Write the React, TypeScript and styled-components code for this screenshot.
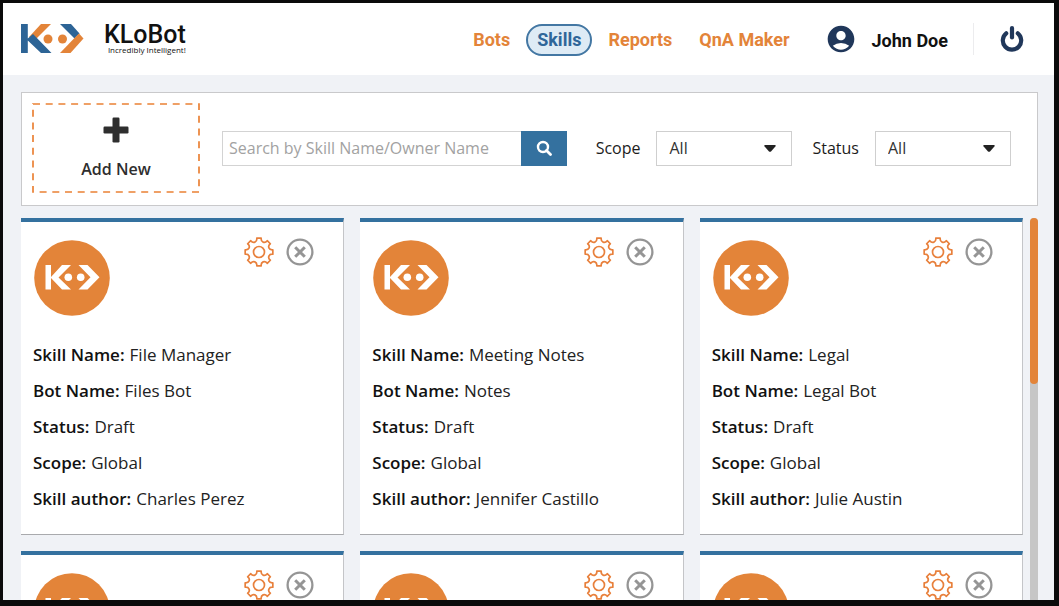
import React from "react";
import styled, { createGlobalStyle } from "styled-components";
import { MdAccountCircle } from "react-icons/md";

const orange = "#e38439";
const blue = "#34719f";
const navy = "#20375a";
const textFont = '"Open Sans", "Noto Sans", sans-serif';

const GlobalStyle = createGlobalStyle`
  * { box-sizing: border-box; }
  body { margin: 0; background: #0b0b0b; font-family: ${textFont}; }
  button, input, select { font: inherit; color: inherit; }
`;

const Frame = styled.div`
  height: 100vh;
  display: flex;
  flex-direction: column;
  border: solid #0b0b0b;
  border-width: 3px 5px 6px 3px;
  background: #f0f2f6;
  overflow: hidden;
`;

const Header = styled.header`
  flex: none;
  display: flex;
  align-items: center;
  height: 72px;
  padding: 0 30px 0 18px;
  background: #fff;
  font-family: Roboto, sans-serif;
`;

const Brand = styled.a`
  display: flex;
  align-items: center;
  gap: 20px;
  color: #111;
  text-decoration: none;
`;

const BrandText = styled.span`
  display: flex;
  flex-direction: column;
  align-items: flex-end;
`;

const BrandName = styled.span`
  font-size: 25px;
  font-weight: 500;
  line-height: 22px;
`;

const Tagline = styled.span`
  font-family: ${textFont};
  font-size: 8px;
  line-height: 8px;
`;

const Nav = styled.nav`
  display: flex;
  align-items: center;
  gap: 5px;
  margin-left: auto;
  padding-top: 2px;
`;

const NavLink = styled.a<{ $active?: boolean }>`
  padding: 0 9px;
  border: 2px solid ${(p) => (p.$active ? "#4377a3" : "transparent")};
  border-radius: 16px;
  background: ${(p) => (p.$active ? "#deebf5" : "transparent")};
  color: ${(p) => (p.$active ? "#2f6699" : orange)};
  font-size: 18px;
  font-weight: 700;
  line-height: 28px;
  text-decoration: none;
`;

const User = styled.div`
  display: flex;
  align-items: center;
  gap: 15px;
  height: 32px;
  margin-left: 24px;
  padding-right: 25px;
  border-right: 1px solid #ececee;
  color: #111;
  font-size: 18px;
  font-weight: 700;
  svg { color: ${navy}; }
`;

const UserName = styled.span`
  padding-top: 2px;
`;

const IconButton = styled.button`
  display: flex;
  padding: 0;
  border: 0;
  background: none;
  cursor: pointer;
`;

const PowerButton = styled(IconButton)`
  margin-left: 26px;
  color: ${navy};
`;

const Main = styled.main`
  flex: 1;
  min-height: 0;
  display: flex;
  flex-direction: column;
  gap: 12px;
  padding: 17px 16px 0 18px;
`;

const Toolbar = styled.section`
  flex: none;
  display: flex;
  align-items: center;
  padding: 10px 26px 12px 10px;
  border: 1px solid #c9c9cb;
  background: #fff;
`;

const AddButton = styled.button`
  position: relative;
  flex: none;
  display: flex;
  flex-direction: column;
  align-items: center;
  gap: 15px;
  width: 168px;
  height: 90px;
  padding: 14px 0 0;
  border: 0;
  background: none;
  color: #2e2e2e;
  font-size: 16px;
  font-weight: 600;
  line-height: 22px;
  cursor: pointer;
`;

const Dashes = styled.svg`
  position: absolute;
  inset: 0;
  width: 100%;
  height: 100%;
`;

const Search = styled.form`
  flex: 1;
  display: flex;
  height: 35px;
  margin-left: 22px;
`;

const SearchInput = styled.input`
  flex: 1;
  min-width: 0;
  padding: 0 6px;
  border: 1px solid #d3d3d3;
  border-right: 0;
  background: #fff;
  font-size: 16px;
  &::placeholder { color: #a2a2a2; opacity: 1; }
`;

const SearchButton = styled.button`
  display: flex;
  align-items: center;
  justify-content: center;
  width: 46px;
  padding: 0;
  border: 0;
  background: ${blue};
  cursor: pointer;
`;

const Filter = styled.label<{ $gap: number }>`
  display: flex;
  align-items: center;
  gap: 16px;
  margin-left: ${(p) => p.$gap}px;
  color: #1c1c1c;
  font-size: 16px;
`;

const SelectBox = styled.span`
  position: relative;
  display: flex;
  align-items: center;
`;

const Select = styled.select`
  width: 136px;
  height: 35px;
  padding: 0 12px;
  border: 1px solid #cfcfcf;
  border-radius: 0;
  background: #fff;
  color: #333;
  appearance: none;
`;

const Caret = styled.svg`
  position: absolute;
  right: 16px;
  pointer-events: none;
`;

const List = styled.div`
  flex: 1;
  min-height: 0;
  display: flex;
  gap: 7px;
`;

const Grid = styled.div`
  flex: 1;
  min-height: 0;
  display: grid;
  grid-template-columns: repeat(3, 1fr);
  grid-auto-rows: max-content;
  gap: 16px;
  overflow: hidden;
`;

const Track = styled.div`
  width: 8px;
  border-radius: 4px 4px 0 0;
  background: #c6c6c6;
`;

const Thumb = styled.div`
  height: 166px;
  border-radius: 4px;
  background: ${orange};
`;

const Card = styled.article`
  padding: 18px 12px 17px;
  border-top: 4px solid ${blue};
  border-right: 1px solid #c4c5c8;
  border-bottom: 1px solid #a9aaad;
  background: #fff;
`;

const CardTop = styled.div`
  display: flex;
  justify-content: space-between;
  align-items: flex-start;
  padding: 0 17px 0 1px;
`;

const Actions = styled.div`
  display: flex;
  align-items: center;
  gap: 12px;
  margin-top: -3px;
`;

const Details = styled.dl`
  margin: 21px 0 0;
  color: #222;
  font-size: 17px;
  line-height: 36px;
`;

const Row = styled.div`
  display: flex;
  gap: 5px;
  white-space: nowrap;
`;

const Term = styled.dt`
  color: #111;
  font-weight: 600;
`;

const Value = styled.dd`
  margin: 0;
`;

const Logo = () => (
  <svg width="63" height="30" viewBox="0 0 63 30" aria-hidden="true">
    <path d="M20 0h10L14 16 8 13z" fill={orange} />
    <path d="M0 0h6.800v14.500L12 10l18.500 19H20L6.800 16.500V29H0z" fill="#2d6496" />
    <path d="M39 0h11l8.500 9.500-5 5z" fill="#2d6496" />
    <path d="M58 9.500l4.500 5L49.500 29H39l14-14.500z" fill={orange} />
    <circle cx="27" cy="15" r="4.500" fill={orange} />
    <circle cx="41.500" cy="15" r="4.500" fill={orange} />
  </svg>
);

const BotAvatar = () => (
  <svg width="76" height="76" viewBox="0 0 76 76" aria-hidden="true">
    <circle cx="38" cy="38" r="37.800" fill={orange} />
    <g fill="#fff">
      <path d="M11.500 25H17v12L28 25h9L24.500 37.500 37 49.500h-9L17 38v11.500h-5.500z" />
      <path d="M44.500 25h9L65.500 37.300 53.500 49.500h-9L56.500 37.300z" />
      <circle cx="34.300" cy="37.300" r="3.800" />
      <circle cx="46.700" cy="37.300" r="3.800" />
    </g>
  </svg>
);

const point = (radius: number, degrees: number) => {
  const a = (degrees * Math.PI) / 180;
  return `${(15 + radius * Math.sin(a)).toFixed(2)} ${(15 - radius * Math.cos(a)).toFixed(2)}`;
};

const gearPath =
  Array.from({ length: 8 }, (_, i) => {
    const a = i * 45;
    return `${i ? "L" : "M"}${point(14, a - 9)}L${point(14, a + 9)}C${point(10, a + 10)} ${point(
      10, a + 35
    )} ${point(14, a + 36)}`;
  }).join("") + "Z";

const GearIcon = () => (
  <svg width="30" height="30" viewBox="0 0 30 30" fill="none" stroke="#e8803c" strokeWidth="1.700" strokeLinejoin="round" aria-hidden="true">
    <path d={gearPath} />
    <circle cx="15" cy="15" r="5.500" />
  </svg>
);

const CloseIcon = () => (
  <svg width="28" height="28" viewBox="0 0 28 28" fill="none" stroke="#959595" aria-hidden="true">
    <circle cx="14" cy="14" r="12.400" strokeWidth="2.300" />
    <path d="M9.200 9.200l9.600 9.600M18.800 9.200l-9.600 9.600" strokeWidth="3" />
  </svg>
);

const PowerIcon = () => (
  <svg width="24" height="28" viewBox="0 0 24 28" fill="none" stroke="currentColor" strokeLinecap="round" aria-hidden="true">
    <path d="M6.200 8.300a9.200 9.200 0 1 0 11.600 0" strokeWidth="4.200" />
    <path d="M12 3v9.500" strokeWidth="4.200" />
  </svg>
);

const PlusIcon = () => (
  <svg width="26" height="26" viewBox="0 0 26 26" fill="#2e2e2e" aria-hidden="true">
    <rect x="9.500" y="0.500" width="7" height="25" rx="1.200" />
    <rect x="0.500" y="9.500" width="25" height="7" rx="1.200" />
  </svg>
);

const SearchIcon = () => (
  <svg width="16" height="16" viewBox="0 0 16 16" fill="none" stroke="#fff" aria-hidden="true">
    <circle cx="7" cy="7" r="5" strokeWidth="2.400" />
    <path d="M10.500 10.500l4 4" strokeWidth="2.800" strokeLinecap="round" />
  </svg>
);

const FilterSelect = ({ label, gap }: { label: string; gap: number }) => (
  <Filter $gap={gap}>
    {label}
    <SelectBox>
      <Select defaultValue="All">
        <option>All</option>
      </Select>
      <Caret width="12" height="7" viewBox="0 0 12 7" aria-hidden="true">
        <path d="M1 0h10q1.200.400.400 1.400L7 6.400q-1 .900-2 0L.600 1.400Q-.200.400 1 0z" fill="#222" />
      </Caret>
    </SelectBox>
  </Filter>
);

const skills = [
  { name: "File Manager", bot: "Files Bot", author: "Charles Perez" },
  { name: "Meeting Notes", bot: "Notes", author: "Jennifer Castillo" },
  { name: "Legal", bot: "Legal Bot", author: "Julie Austin" },
];

type Skill = (typeof skills)[number];

const SkillCard = ({ skill }: { skill?: Skill }) => (
  <Card>
    <CardTop>
      <BotAvatar />
      <Actions>
        <IconButton type="button" aria-label="Settings"><GearIcon /></IconButton>
        <IconButton type="button" aria-label="Remove"><CloseIcon /></IconButton>
      </Actions>
    </CardTop>
    {skill && (
      <Details>
        <Row><Term>Skill Name:</Term><Value>{skill.name}</Value></Row>
        <Row><Term>Bot Name:</Term><Value>{skill.bot}</Value></Row>
        <Row><Term>Status:</Term><Value>Draft</Value></Row>
        <Row><Term>Scope:</Term><Value>Global</Value></Row>
        <Row><Term>Skill author:</Term><Value>{skill.author}</Value></Row>
      </Details>
    )}
  </Card>
);

export default function App() {
  return (
    <>
      <GlobalStyle />
      <Frame>
        <Header>
          <Brand href="#">
            <Logo />
            <BrandText>
              <BrandName>KLoBot</BrandName>
              <Tagline>Incredibly Intelligent!</Tagline>
            </BrandText>
          </Brand>
          <Nav>
            <NavLink href="#bots">Bots</NavLink>
            <NavLink href="#skills" $active>Skills</NavLink>
            <NavLink href="#reports">Reports</NavLink>
            <NavLink href="#qna">QnA Maker</NavLink>
          </Nav>
          <User>
            <MdAccountCircle size={32} />
            <UserName>John Doe</UserName>
          </User>
          <PowerButton type="button" aria-label="Log out"><PowerIcon /></PowerButton>
        </Header>
        <Main>
          <Toolbar>
            <AddButton type="button">
              <Dashes aria-hidden="true">
                <rect x="1" y="1" width="166" height="88" fill="none" stroke="#ea8135" strokeWidth="1.700" strokeDasharray="7 5.700" />
              </Dashes>
              <PlusIcon />
              Add New
            </AddButton>
            <Search>
              <SearchInput aria-label="Search skills" placeholder="Search by Skill Name/Owner Name" />
              <SearchButton type="button" aria-label="Search"><SearchIcon /></SearchButton>
            </Search>
            <FilterSelect label="Scope" gap={29} />
            <FilterSelect label="Status" gap={20} />
          </Toolbar>
          <List>
            <Grid>
              {skills.map((s) => <SkillCard key={s.name} skill={s} />)}
              {[0, 1, 2].map((i) => <SkillCard key={i} />)}
            </Grid>
            <Track><Thumb /></Track>
          </List>
        </Main>
      </Frame>
    </>
  );
}
